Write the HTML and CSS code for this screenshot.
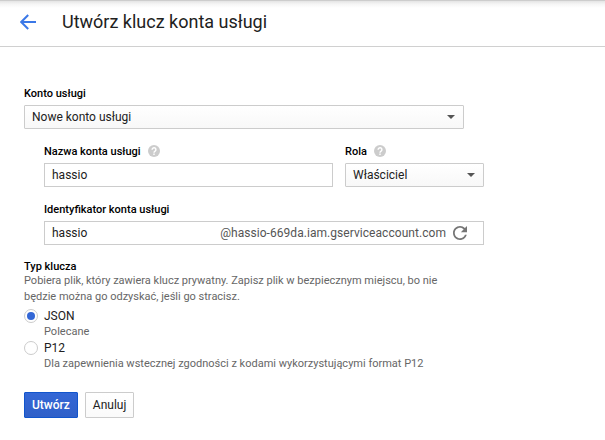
FILE: index.html
```html
<!DOCTYPE html>
<html lang="pl">
<head>
<meta charset="utf-8">
<title>Utwórz klucz konta usługi</title>
<link rel="stylesheet" href="styles.css">
</head>
<body>
<header class="header">
  <svg class="back" viewBox="0 0 16 16" width="16" height="16"><path d="M16 8H1.5M8.2 1L1.2 8l7 7"/></svg>
  <h1 class="title">Utwórz klucz konta usługi</h1>
</header>
<main class="form">
  <div class="label">Konto usługi</div>
  <div class="field select wide"><span>Nowe konto usługi</span><i class="caret"></i></div>
  <div class="nested">
    <div class="row">
      <div class="name">
        <div class="label">Nazwa konta usługi <svg class="help" viewBox="0 0 12 12" width="12" height="12"><circle cx="6" cy="6" r="6"/><path d="M4.1 4.7a1.9 1.9 0 1 1 3 1.5C6.4 6.6 6 6.9 6 7.7M6 8.6v1.3"/></svg></div>
        <div class="field"><span>hassio</span></div>
      </div>
      <div class="role">
        <div class="label">Rola <svg class="help" viewBox="0 0 12 12" width="12" height="12"><circle cx="6" cy="6" r="6"/><path d="M4.1 4.7a1.9 1.9 0 1 1 3 1.5C6.4 6.6 6 6.9 6 7.7M6 8.6v1.3"/></svg></div>
        <div class="field select"><span>Właściciel</span><i class="caret"></i></div>
      </div>
    </div>
    <div class="label">Identyfikator konta usługi</div>
    <div class="field ident"><span>hassio</span><span class="domain">@hassio-669da.iam.gserviceaccount.com</span>
      <svg class="refresh" viewBox="4 4 16 16" width="14" height="14"><path d="M17.65 6.35C16.2 4.9 14.21 4 12 4c-4.42 0-7.99 3.58-7.99 8s3.57 8 7.99 8c3.73 0 6.84-2.55 7.73-6h-2.08c-.82 2.33-3.04 4-5.65 4-3.31 0-6-2.69-6-6s2.69-6 6-6c1.66 0 3.14.69 4.22 1.78L13 11h7V4l-2.35 2.35z"/></svg>
    </div>
  </div>
  <div class="label type">Typ klucza</div>
  <p class="hint">Pobiera plik, który zawiera klucz prywatny. Zapisz plik w bezpiecznym miejscu, bo nie<br>będzie można go odzyskać, jeśli go stracisz.</p>
  <div class="option"><i class="radio on"></i><div><div class="choice">JSON</div><div class="hint">Polecane</div></div></div>
  <div class="option"><i class="radio"></i><div><div class="choice">P12</div><div class="hint">Dla zapewnienia wstecznej zgodności z kodami wykorzystującymi format P12</div></div></div>
  <div class="actions"><button class="btn primary">Utwórz</button><button class="btn">Anuluj</button></div>
</main>
</body>
</html>
```
FILE: styles.css
```css
* { box-sizing: border-box; }
body {
  margin: 0;
  background: #fff;
  color: #212121;
  font: 12px/16px Roboto, "Liberation Sans", sans-serif;
}
.header {
  display: flex;
  align-items: center;
  height: 47px;
  padding: 0 20px 2px;
  gap: 26px;
  border-bottom: 1px solid #d0d0d0;
  background: linear-gradient(#cdcdcd 0, #cdcdcd 1px, #e4e4e4 1px, #f5f5f5 4px, #fff 8px);
}
.back { fill: none; stroke: #3b78e7; stroke-width: 2; }
.title { margin: 0; font-size: 18px; line-height: 24px; font-weight: 400; }
.form { padding: 39px 24px 0; }
.label {
  display: flex;
  align-items: center;
  gap: 7px;
  height: 16px;
  margin-bottom: 3px;
  font-size: 11px;
  font-weight: 500;
  color: #000;
}
.help { margin-top: -2px; fill: #ccc; }
.help path { fill: none; stroke: #fff; stroke-width: 1.4; }
.field {
  display: flex;
  align-items: center;
  justify-content: space-between;
  height: 24px;
  padding: 0 7px;
  border: 1px solid #ccc;
}
.select { border-radius: 1px; background: linear-gradient(#fff, #f8f8f8); padding-right: 8px; }
.wide { width: 440px; }
.caret { border: 4px solid transparent; border-top-color: #555; border-bottom: 0; }
.nested { width: 440px; margin: 15px 0 0 20px; }
.row { display: flex; gap: 12px; margin-bottom: 15px; }
.name { width: 289px; }
.role { width: 139px; }
.ident { padding-right: 16px; }
.domain { margin-left: auto; letter-spacing: .05px; color: #555; }
.refresh { margin-left: 7px; fill: #757575; }
.type { margin: 15px 0 0; height: 13px; }
.hint { margin: 0; font-size: 11px; line-height: 16px; color: #666; }
.option { display: flex; gap: 6px; height: 32px; }
.type + .hint { margin-bottom: 3px; }
.choice { height: 16px; line-height: 16px; }
.radio {
  display: flex;
  align-items: center;
  justify-content: center;
  width: 14px;
  height: 14px;
  margin-top: 1px;
  border: 1px solid #ccc;
  border-radius: 50%;
}
.on::before { content: ""; width: 8px; height: 8px; border-radius: 50%; background: #3367d6; }
.actions { display: flex; gap: 7px; margin-top: 20px; }
.btn {
  height: 26px;
  padding: 0 7px;
  border: 1px solid #ccc;
  border-radius: 1px;
  background: linear-gradient(#fff, #fafafa);
  color: #212121;
  font: 12px/16px Roboto, "Liberation Sans", sans-serif;
}
.primary { border-color: #1155cc; background: linear-gradient(#3367d6, #3060c8); color: #fff; font-weight: 500; }
```
